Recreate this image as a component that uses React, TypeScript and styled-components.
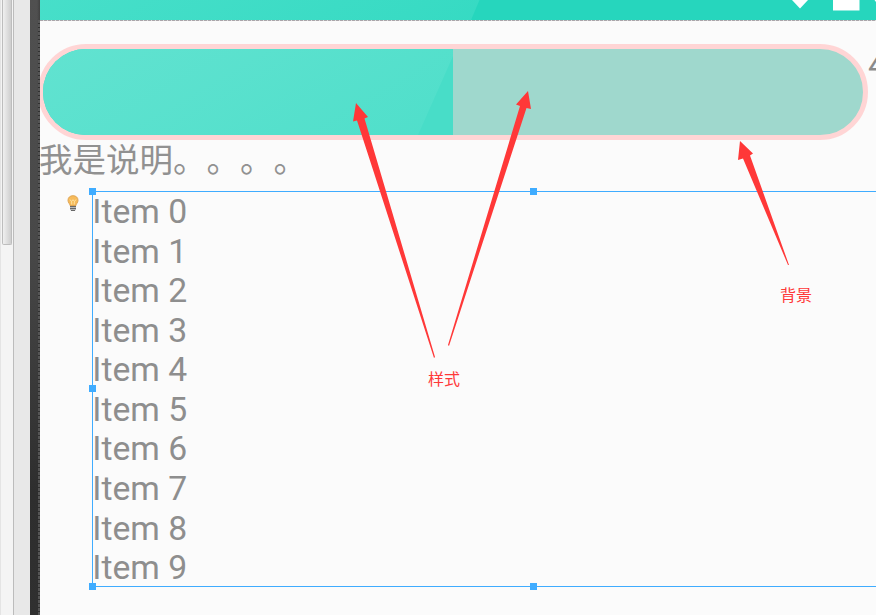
import React from "react";
import styled, { createGlobalStyle } from "styled-components";

const GlobalStyle = createGlobalStyle`
  body { margin: 0; overflow: hidden; background: #fbfbfb; }
  * { box-sizing: border-box; }
`;

const Window = styled.div`
  position: relative;
  display: flex;
  width: 876px;
  height: 615px;
  overflow: hidden;
  font-family: Roboto, "Noto Sans CJK SC", sans-serif;
`;

const ScrollTrack = styled.div`
  flex: 0 0 14px;
  padding-left: 1px;
  background: #f4f4f4;
  border-left: 1px solid #e4e4e4;
  border-right: 1px solid #bcbcbc;
`;

const ScrollThumb = styled.div`
  width: 10px;
  height: 245px;
  border: 1px solid #bdbdbd;
  border-top: 0;
  border-radius: 0 0 2px 2px;
  background: linear-gradient(90deg, #f0f0f0, #cecece);
`;

const Gutter = styled.div`
  flex: 0 0 16px;
  background: #e8e8e8;
`;

const Bezel = styled.div`
  display: flex;
  justify-content: flex-end;
  flex: 0 0 10px;
  background: linear-gradient(90deg, #0000 70%, #0003), linear-gradient(#505050, #484848 40%, #2e2e2e 80%, #303030);
`;

const BezelEdge = styled.div`
  width: 2px;
  margin-top: 20px;
  background: repeating-linear-gradient(#555 0 3px, #303030 3px 4px);
`;

const Screen = styled.main`
  flex: 1;
  min-width: 0;
  overflow: hidden;
  background: #fbfbfb;
`;

const StatusBar = styled.header`
  height: 20px;
  background: #26d6bd;
`;

const StatusDrawing = styled.svg`
  display: block;
  width: 836px;
  height: 20px;
`;

const Divider = styled.div`
  height: 1px;
  background: repeating-linear-gradient(90deg, #aaa5aa 0 3px, #dedede 3px 4px);
`;

const ProgressRow = styled.section`
  display: flex;
  margin: 23px 0 0 -2px;
  height: 96px;
`;

const ProgressTrack = styled.div`
  flex: 0 0 830px;
  border: 5px solid #ffd5d5;
  border-radius: 48px;
  overflow: hidden;
  background: #9fd8cd;
`;

const ProgressDrawing = styled.svg`
  display: block;
  width: 410px;
  height: 86px;
`;

const Percent = styled.span`
  margin-top: 1px;
  font-size: 33.7px;
  line-height: 40px;
  color: #8b8b8b;
  white-space: nowrap;
`;

const Description = styled.p`
  margin: 0 0 0 -1px;
  padding-top: 1px;
  height: 51px;
  font-size: 33.5px;
  line-height: 40px;
  color: #919191;
  text-spacing-trim: space-all;
  font-feature-settings: "chws" 0, "halt" 0;
`;

const ListArea = styled.div`
  display: flex;
`;

const Hint = styled.div`
  flex: 0 0 52px;
  padding: 4px 0 0 27px;
`;

const ItemList = styled.ul`
  flex: 0 0 884px;
  height: 396px;
  margin: 0;
  padding: 0;
  list-style: none;
  border: 1px solid #3facff;
`;

const Item = styled.li`
  height: 39.57px;
  margin-left: -0.7px;
  font-size: 33.7px;
  line-height: 39.4px;
  color: #8e8e8e;
`;

const Handle = styled.i<{ $x: number; $y: number }>`
  position: absolute;
  left: ${(p) => p.$x}px;
  top: ${(p) => p.$y}px;
  width: 7px;
  height: 7px;
  background: #3facff;
`;

const Arrows = styled.svg`
  position: absolute;
  inset: 0;
`;

const Note = styled.span<{ $x: number; $y: number }>`
  position: absolute;
  left: ${(p) => p.$x}px;
  top: ${(p) => p.$y}px;
  font-family: "Noto Sans CJK SC", sans-serif;
  font-size: 16px;
  font-weight: 400;
  line-height: 20px;
  color: #ff3838;
`;

const handles = [
  [89, 188],
  [530, 188],
  [89, 385],
  [89, 583],
  [530, 583],
];

function Bulb() {
  return (
    <svg width="12" height="17" viewBox="0 0 12 17">
      <path d="M6 .7C2.900.7 1 2.600 1 5.300C1 7.800 3 8.700 3 10.500H9C9 8.700 11 7.800 11 5.300C11 2.600 9.100.7 6 .7Z" fill="#f7bb5a" stroke="#e0a552" />
      <path d="M3 4.500L4.500 6.500L6 4.700L7.500 6.500L9 4.500M4.700 6.500V9.500M7.300 6.500V9.500" fill="none" stroke="#ffeab0" strokeWidth=".8" />
      <path d="M3 11H9V14.500L8 15.800H4L3 14.500Z" fill="#b8b8b8" />
      <path d="M3 11.500H9M3 13.500H9M4 15.500H8" stroke="#686868" strokeWidth="1" />
    </svg>
  );
}

export default function App() {
  return (
    <>
      <GlobalStyle />
      <Window>
        <ScrollTrack>
          <ScrollThumb />
        </ScrollTrack>
        <Gutter />
        <Bezel>
          <BezelEdge />
        </Bezel>
        <Screen>
          <StatusBar>
            <StatusDrawing viewBox="40 0 836 20">
              <defs>
                <linearGradient id="barGlare" gradientUnits="userSpaceOnUse" x1="100" y1="-100" x2="330" y2="300">
                  <stop stopColor="#4be0cb" />
                  <stop offset="1" stopColor="#2ad7be" />
                </linearGradient>
              </defs>
              <path d="M40 0H479.500L471 20H40Z" fill="url(#barGlare)" />
              <path d="M792 0H808L800 8.500Z" fill="#fff" />
              <path d="M833 0H859.500V10.500H833Z" fill="#fff" />
              <path d="M874.500 0H876V2Z" fill="#fff" />
            </StatusDrawing>
          </StatusBar>
          <Divider />
          <ProgressRow>
            <ProgressTrack>
              <ProgressDrawing viewBox="43 49 410 86">
                <defs>
                  <linearGradient id="fillGlare" gradientUnits="userSpaceOnUse" x1="100" y1="-30" x2="290" y2="300">
                    <stop stopColor="#64e3d1" />
                    <stop offset="1" stopColor="#4bdec9" />
                  </linearGradient>
                </defs>
                <path d="M43 49H453V135H43Z" fill="#48ddc8" />
                <path d="M43 49H453V56L418 135H43Z" fill="url(#fillGlare)" />
              </ProgressDrawing>
            </ProgressTrack>
            <Percent>4</Percent>
          </ProgressRow>
          <Description>我是说明。。。。</Description>
          <ListArea>
            <Hint>
              <Bulb />
            </Hint>
            <ItemList>
              {Array.from({ length: 10 }, (_, i) => (
                <Item key={i}>Item {i}</Item>
              ))}
            </ItemList>
          </ListArea>
        </Screen>
        {handles.map(([x, y]) => (
          <Handle key={`${x}-${y}`} $x={x} $y={y} />
        ))}
        <Arrows width="876" height="615" fill="#ff3838">
          <path d="M356 103L368 117L364.500 118.500L435 357L434 358L357 120.500L353 121.500Z" />
          <path d="M528 91L531 109L526.500 108L449 346L448 345L520 106L516 104.500Z" />
          <path d="M740 141L753 153.500L750 155.500L789 265H788L743 158.500L738 160Z" />
        </Arrows>
        <Note $x={428} $y={368}>样式</Note>
        <Note $x={780} $y={284}>背景</Note>
      </Window>
    </>
  );
}
